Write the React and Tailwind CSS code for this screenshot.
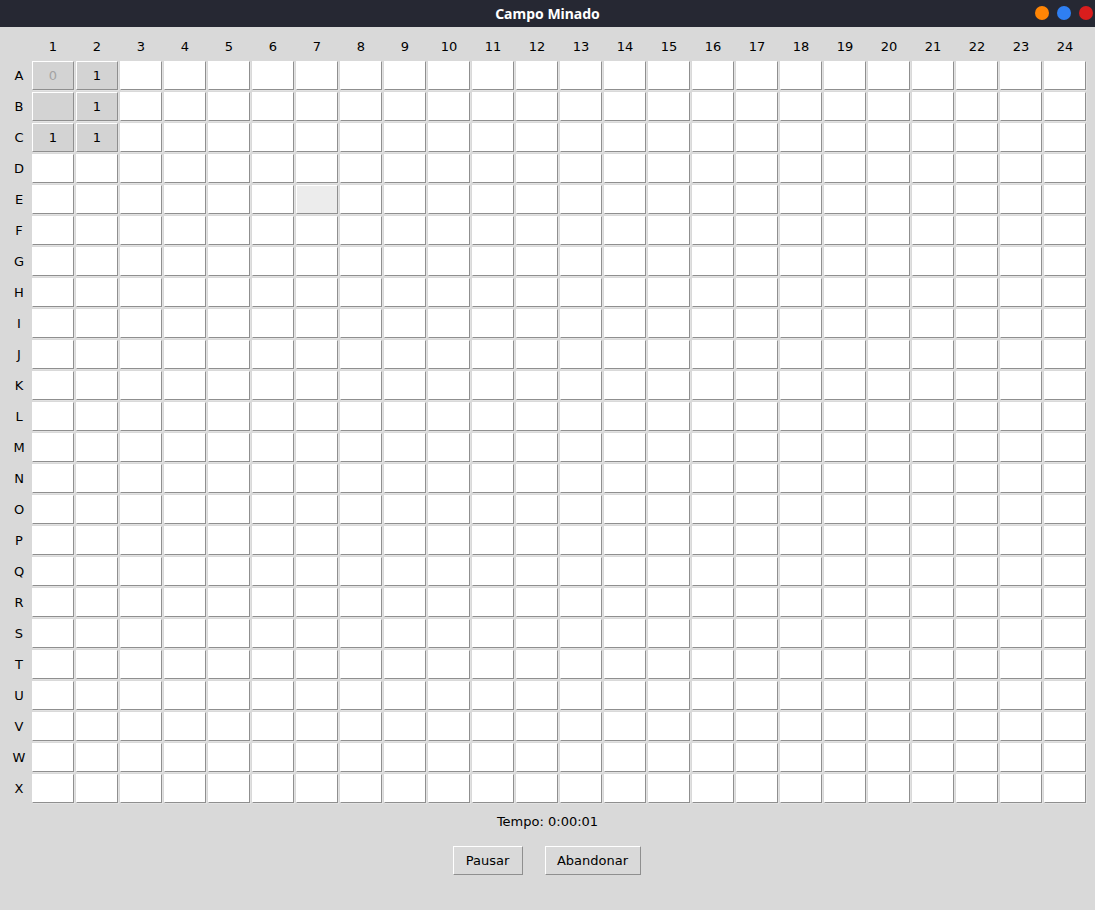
import { useState, useEffect } from 'react';

const ROWS = 'ABCDEFGHIJKLMNOPQRSTUVWX'.split('');
const COLS = Array.from({ length: 24 }, (_, i) => i + 1);

// revealed cells from the current board state
const REVEALED = {
  'A-1': '0',
  'A-2': '1',
  'B-1': '',
  'B-2': '1',
  'C-1': '1',
  'C-2': '1',
};

function Cell({ row, col, hovered }) {
  const key = `${row}-${col}`;
  const revealed = key in REVEALED;
  const value = REVEALED[key];

  let fill = 'bg-white';
  if (revealed) fill = 'bg-[#d3d3d3]';
  else if (hovered) fill = 'bg-[#ececec]';

  return (
    <div
      className={`h-[29px] w-[42px] flex items-center justify-center border border-t-white border-l-white border-r-[#8f8f8f] border-b-[#8f8f8f] shadow-[1px_1px_0_#e2e2e2] text-[13px] ${fill} ${
        value === '0' ? 'text-[#a3a3a3]' : 'text-black'
      }`}
    >
      {value}
    </div>
  );
}

function TkButton({ children, className = '' }) {
  return (
    <button
      className={`h-[29px] border border-t-white border-l-white border-r-[#8f8f8f] border-b-[#8f8f8f] bg-[#d9d9d9] text-[13px] text-black ${className}`}
    >
      {children}
    </button>
  );
}

export default function App() {
  const [seconds, setSeconds] = useState(1);

  useEffect(() => {
    // timer is frozen for the screenshot
    setSeconds(1);
  }, []);

  const tempo = `0:00:${String(seconds).padStart(2, '0')}`;

  return (
    <div
      className="w-[1095px] h-[910px] bg-[#d9d9d9] flex flex-col overflow-hidden"
      style={{ fontFamily: '"DejaVu Sans", sans-serif' }}
    >
      {/* window title bar */}
      <div className="h-[27px] bg-[#262833] flex items-center justify-center relative shrink-0">
        <span
          className="text-white text-[14px] font-bold"
          style={{ fontFamily: '"Noto Sans", sans-serif' }}
        >
          Campo Minado
        </span>
        <div className="absolute right-[2px] top-[6px] flex gap-[8px]">
          <span className="w-[14px] h-[14px] rounded-full bg-[#ff8505]" />
          <span className="w-[14px] h-[14px] rounded-full bg-[#2f7ff2]" />
          <span className="w-[14px] h-[14px] rounded-full bg-[#d91d1d]" />
        </div>
      </div>

      {/* board */}
      <div className="grid grid-cols-[30px_repeat(24,42px)] grid-rows-[32px_repeat(24,29px)] gap-[2px] text-[13px] text-black">
        <div />
        {COLS.map((c) => (
          <div key={c} className="flex items-end justify-center pb-[4px] leading-[16px]">
            {c}
          </div>
        ))}
        {ROWS.map((r) => (
          <Row key={r} row={r} />
        ))}
      </div>

      <div className="mt-[11px] text-center text-[13px] leading-[16px] text-black">
        Tempo: {tempo}
      </div>

      <div className="mt-[16px] flex justify-center gap-[22px] pr-[2px]">
        <TkButton className="w-[70px]">Pausar</TkButton>
        <TkButton className="w-[96px]">Abandonar</TkButton>
      </div>
    </div>
  );
}

function Row({ row }) {
  return (
    <>
      <div className="flex items-center justify-center pl-[8px]">{row}</div>
      {COLS.map((c) => (
        <Cell key={c} row={row} col={c} hovered={row === 'E' && c === 7} />
      ))}
    </>
  );
}
